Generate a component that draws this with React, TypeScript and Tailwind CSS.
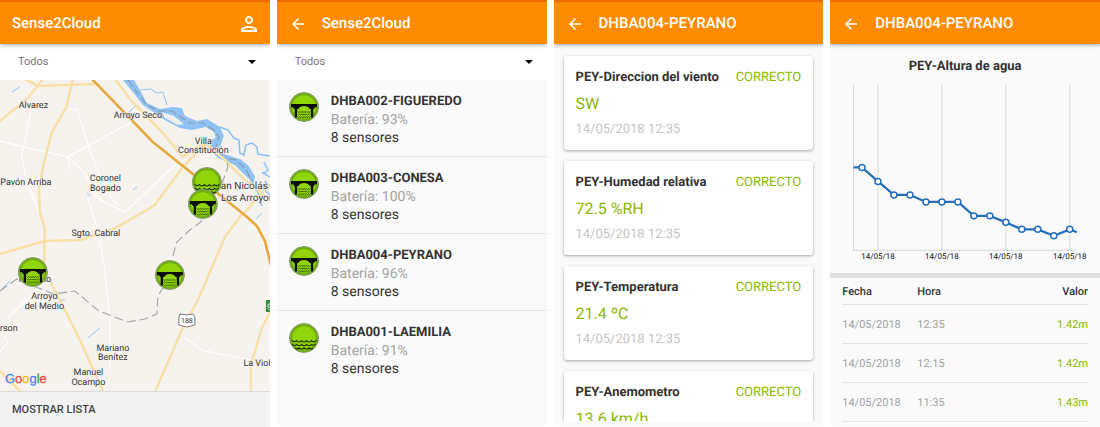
import { ReactNode } from "react";
import { MdArrowBack, MdOutlinePerson } from "react-icons/md";

const stations = [
  { name: "DHBA002-FIGUEREDO", battery: 93, kind: "bridge" },
  { name: "DHBA003-CONESA", battery: 100, kind: "bridge" },
  { name: "DHBA004-PEYRANO", battery: 96, kind: "bridge" },
  { name: "DHBA001-LAEMILIA", battery: 91, kind: "water" },
];

const sensors = [
  { name: "PEY-Direccion del viento", value: "SW" },
  { name: "PEY-Humedad relativa", value: "72.5 %RH" },
  { name: "PEY-Temperatura", value: "21.4 ºC" },
  { name: "PEY-Anemometro", value: "13.6 km/h" },
];

const readings = [
  { date: "14/05/2018", time: "12:35", value: "1.42m" },
  { date: "14/05/2018", time: "12:15", value: "1.42m" },
  { date: "14/05/2018", time: "11:35", value: "1.43m" },
];

const points = [
  [32, 167.5], [48, 181.5], [64, 195], [80, 195], [96, 202], [112, 202], [128, 202],
  [144, 216], [160, 216], [176, 222.5], [192, 229.5], [208, 229.5], [224, 236], [240, 229.5],
];

const ticks = [48, 112, 176, 240];

const places: [string, number, number][] = [
  ["Alvarez", 33.5, 108],
  ["Arroyo Seco", 138, 118],
  ["Villa", 203.5, 144],
  ["Constitución", 203.5, 153],
  ["Pavón Arriba", 26, 185],
  ["Coronel", 105.5, 181],
  ["Bogado", 105.5, 191],
  ["Sgto. Cabral", 96, 236],
  ["Peyrano", 35, 282],
  ["Arroyo", 44.5, 299],
  ["del Medio", 44.5, 309],
  ["Mariano", 113, 351],
  ["Benítez", 113, 360],
  ["Manuel", 88.5, 375],
  ["Ocampo", 88.5, 385],
];

// Round station badge, drawn around 0,0 with a radius of 15
function Badge({ kind }: { kind: string }) {
  return (
    <g>
      <circle r="14.5" fill="#74b113" stroke="#8a9a78" strokeWidth="1" />
      <circle r="12.4" fill="#91d508" stroke="#5f980f" strokeWidth="0.7" />
      {kind === "bridge" ? (
        <g>
          <path d="M-13 -3H13V0.2H11.2L9.2 2.6V10.5H6.8V2H-6.8V10.5H-9.2V2.6L-11.2 0.2H-13Z" fill="#0b0f05" />
          <path d="M-6.8 11V4.2Q-5 -0.9 0 -0.9T6.8 4.2V11Z" fill="#91d508" />
          <path
            d="M-6.5 4.6q1.1 1.6 2.2 0q1.1 1.6 2.2 0q1.1 1.6 2.2 0q1.1 1.6 2.2 0q1.1 1.6 2.2 0q1.1 1.6 2.2 0M-6.5 7.2q1.1 1.6 2.2 0q1.1 1.6 2.2 0q1.1 1.6 2.2 0q1.1 1.6 2.2 0q1.1 1.6 2.2 0q1.1 1.6 2.2 0M-6.5 9.8q1.1 1.6 2.2 0q1.1 1.6 2.2 0q1.1 1.6 2.2 0q1.1 1.6 2.2 0q1.1 1.6 2.2 0q1.1 1.6 2.2 0"
            fill="none"
            stroke="#2a4207"
            strokeWidth="0.8"
          />
        </g>
      ) : (
        <path
          d="M-12.5 2q2.5 3 5 0.6q2.5 2.8 5 0q2.5 2.8 5 0q2.5 2.8 5 0q2.5 2.8 5 -0.6M-12 6q2.3 2.8 4.6 0.4q2.5 2.8 5 0q2.5 2.8 5 0q2.5 2.8 5 0q2.3 2 4.2 -0.4M-9 9.8q2 2 4 0q2.5 2.4 5 0q2.5 2.4 5 0q2 2 4 0"
          fill="none"
          stroke="#1a2905"
          strokeWidth="1.1"
        />
      )}
    </g>
  );
}

function Header({ title, back }: { title: string; back?: boolean }) {
  return (
    <header className="relative z-10 flex h-11 shrink-0 items-center border-t-2 border-[#ee6a00] bg-[#ff8c00] pt-px text-white shadow-[0_1px_4px_rgba(0,0,0,0.35)]">
      {back && (
        <button aria-label="Volver" className="ml-3 flex w-[33px] items-center">
          <MdArrowBack className="size-[18px]" />
        </button>
      )}
      <h1 className={back ? "text-[15px] font-medium" : "ml-3 text-[15px] font-medium"}>{title}</h1>
      {!back && (
        <button aria-label="Usuario" className="ml-auto mr-[9px]">
          <MdOutlinePerson className="size-6" />
        </button>
      )}
    </header>
  );
}

function Filter() {
  return (
    <div className="relative flex h-9 shrink-0 items-center bg-white px-[18px]">
      <select aria-label="Filtro" className="w-full appearance-none text-[11px] text-[#757575]">
        <option>Todos</option>
      </select>
      <svg viewBox="0 0 8 4" className="pointer-events-none absolute right-[14px] h-1 w-2">
        <path d="M0 0H8L4 4Z" fill="#000" />
      </svg>
    </div>
  );
}

function Screen({ children }: { children: ReactNode }) {
  return <section className="mb-[2px] flex min-h-0 flex-col overflow-hidden bg-[#fafafa]">{children}</section>;
}

function StationMap() {
  return (
    <svg viewBox="0 80 270 311" preserveAspectRatio="xMidYMid slice" className="min-h-0 w-full flex-1 bg-[#f6f3ef]">
      {/* minor roads */}
      <g fill="none" stroke="#ffffff" strokeWidth="1.2">
        <path d="M0 141L68 157L135 120L134 108M68 157L85 173L97 198L125 212" />
        <path d="M69 110L77 109L90 150L105 190L118 206" />
        <path d="M31 112L22 155L26 178L40 215" />
        <path d="M88 198L98 230L105 270L110 320L110 370" />
        <path d="M68 157L70 170M125 212L175 165" />
        <path d="M185 337L201 350L270 364" />
        <path d="M0 352L8 342L0 330M8 318L44 283" />
      </g>
      {/* water */}
      <g fill="none" stroke="#8fc3f5" strokeWidth="1">
        <path d="M140 90L151 89L157 93L163 92L167 105M129 112L136 106M12 92L20 87M87 193L91 196M133 190L137 187M88 338L100 328M2 289L10 281M256 219L262 213M60 300L65 300" />
        <path d="M220 127L228 130L234 138L239 140L240 153L244 155L246 145L252 143L257 147L258 154L270 156M262 172L270 177M260 186L270 195M264 162L268 170L263 174M250 182L258 192L262 206M265 181L268 185" strokeWidth="1.6" />
      </g>
      <path
        d="M123 80H134L140 90L147 103L160 109L173 107L182 108L185 116L197 121L207 119L220 127L224 136L219 150L224 154L240 159L248 165L255 176L254 184L246 176L235 165L218 158L208 147L211 140L216 138L214 132L206 127L192 130L180 128L163 119L155 113L143 105L133 92Z"
        fill="#8fc3f5"
      />
      <path d="M162 112L174 116L184 124L178 125L165 118Z" fill="#eef1ef" />
      <path
        d="M128 80L137 92L146 104L158 111L172 111L181 117L190 123L203 123L214 130L219 137L216 148L224 158L236 160L246 169L252 181"
        fill="none"
        stroke="#8798a8"
        strokeWidth="1.1"
        strokeDasharray="8 3"
      />
      {/* secondary roads */}
      <g fill="none" stroke="#f9e0a8" strokeWidth="2.6" strokeLinejoin="round">
        <path d="M25 79L38 86L26 100L0 121M43 79L38 86L95 84" />
        <path d="M73 79L66 108L52 132L44 163L39 190L40 212L45 228L44 270L60 300L80 340L100 384L103 392" />
        <path d="M115 79L131 100L162 132L183 157L198 146L208 145L225 160L243 178L270 200" />
        <path d="M203 146L183 167L155 205L140 214L112 230L80 240L45 241L0 254" />
        <path d="M242 214L225 237L198 300L182 330L155 392M270 185L256 199L245 213" />
        <path d="M270 312L262 328L251 365L251 392M0 371L21 392" />
      </g>
      <path d="M92 79L153 142L193 174L210 187L246 216L257 226L265 241L271 265" fill="none" stroke="#e8a840" strokeWidth="2.6" />
      {/* district border */}
      <path
        d="M0 291L17 279L36 287L54 294L75 291L99 311L128 322L145 319L157 314L158 296L163 288M173 256L177 242L190 230L201 222L203 210M222 184L228 167L227 161"
        fill="none"
        stroke="#a5a5a5"
        strokeWidth="1.1"
        strokeDasharray="9 4"
      />
      <g fontSize="9" textAnchor="middle" fill="#333" stroke="#f6f3ef" strokeWidth="1" paintOrder="stroke">
        {places.map(([name, x, y]) => (
          <text key={name} x={x} y={y}>
            {name}
          </text>
        ))}
        <text x="0" y="331" textAnchor="start">rson</text>
        <text x="243.5" y="366" textAnchor="start">La Violeta</text>
        <text x="215" y="189" fontSize="10" textAnchor="start">San Nicolás de</text>
        <text x="221" y="201" fontSize="10" textAnchor="start">Los Arroyos</text>
      </g>
      <path d="M180 314Q187 316 193 314L195 317V325L187 327L179 325V317Z" fill="#fff" stroke="#777" strokeWidth="1" />
      <text x="187" y="323" fontSize="7" textAnchor="middle" fill="#333">188</text>
      <rect x="266" y="300" width="12" height="12" fill="#3c8c3c" />
      <text x="267" y="310" fontSize="9" fill="#fff">9</text>
      <g transform="translate(207 182)"><Badge kind="water" /></g>
      <g transform="translate(203 204)"><Badge kind="bridge" /></g>
      <g transform="translate(33 272)"><Badge kind="bridge" /></g>
      <g transform="translate(170 275)"><Badge kind="bridge" /></g>
      <text x="5" y="383" fontSize="13" className="font-['Liberation_Sans',sans-serif]">
        <tspan fill="#4285f4" stroke="#4285f4" strokeWidth="0.3">G</tspan>
        <tspan fill="#ea4335" stroke="#ea4335" strokeWidth="0.3">o</tspan>
        <tspan fill="#fbbc05" stroke="#fbbc05" strokeWidth="0.3">o</tspan>
        <tspan fill="#4285f4" stroke="#4285f4" strokeWidth="0.3">g</tspan>
        <tspan fill="#34a853" stroke="#34a853" strokeWidth="0.3">l</tspan>
        <tspan fill="#ea4335" stroke="#ea4335" strokeWidth="0.3">e</tspan>
      </text>
    </svg>
  );
}

function Chart() {
  const line = [[23.5, 167.5], ...points, [247, 232.5]].map((p) => p.join(",")).join(" ");
  return (
    <svg viewBox="0 85 270 180" className="w-full shrink-0">
      <g stroke="#d6d6d6" strokeWidth="1">
        <path d="M23.5 85V250.5H247" fill="none" />
        {ticks.map((x) => (
          <line key={x} x1={x} x2={x} y1="85" y2="250" />
        ))}
      </g>
      <polyline points={line} fill="none" stroke="#246eb9" strokeWidth="2.2" />
      {points.map(([x, y]) => (
        <circle key={x} cx={x} cy={y} r="3" fill="#fff" stroke="#246eb9" strokeWidth="1.5" />
      ))}
      {ticks.map((x) => (
        <text key={x} x={x} y="259" fontSize="8" textAnchor="middle" fill="#111">
          14/05/18
        </text>
      ))}
    </svg>
  );
}

export default function App() {
  return (
    <main className="grid h-screen grid-cols-4 grid-rows-[minmax(0,1fr)] gap-[7px] overflow-hidden bg-white font-[Roboto,sans-serif] text-[#333] [text-rendering:geometricPrecision]">
      {/* Map */}
      <section className="flex min-h-0 flex-col overflow-hidden">
        <Header title="Sense2Cloud" />
        <Filter />
        <StationMap />
        <button className="h-9 shrink-0 border-t border-[#dcdcdc] bg-[#f2f2f2] px-3 pt-[2px] text-left text-[11px] font-medium text-[#444]">
          MOSTRAR LISTA
        </button>
      </section>

      {/* Station list */}
      <Screen>
        <Header title="Sense2Cloud" back />
        <Filter />
        <ul>
          {stations.map((s) => (
            <li key={s.name} className="flex h-[77px] gap-3 border-b border-[#e2e2e2] px-3 pt-3 text-[14px] leading-[18px] last:border-b-0">
              <svg viewBox="-15 -15 30 30" className="size-[30px] shrink-0">
                <Badge kind={s.kind} />
              </svg>
              <div className="pt-px">
                <h2 className="text-[13px] font-bold">{s.name}</h2>
                <p className="text-[#a3a3a3]">Batería: {s.battery}%</p>
                <p>8 sensores</p>
              </div>
            </li>
          ))}
        </ul>
      </Screen>

      {/* Sensors of a station */}
      <Screen>
        <Header title="DHBA004-PEYRANO" back />
        <div className="mb-1 flex min-h-0 flex-1 flex-col gap-[11px] overflow-hidden px-[10px] pt-3">
          {sensors.map((s) => (
            <article key={s.name} className="h-[94px] shrink-0 rounded-[3px] bg-white px-3 pt-3 shadow-[0_1px_3px_rgba(0,0,0,0.35)]">
              <div className="flex justify-between text-[13px] leading-5">
                <h2 className="font-bold">{s.name}</h2>
                <span className="text-[#8ab800]">CORRECTO</span>
              </div>
              <p className="mt-1 text-[16px] leading-6 text-[#8ab800]">{s.value}</p>
              <p className="mt-1 text-[13px] leading-5 text-[#c4c4c4]">14/05/2018 12:35</p>
            </article>
          ))}
        </div>
      </Screen>

      {/* Sensor history */}
      <Screen>
        <Header title="DHBA004-PEYRANO" back />
        <h2 className="pt-[13px] pb-2 text-center text-[13px] leading-5 font-bold">PEY-Altura de agua</h2>
        <Chart />
        <div className="mt-2 border-t-[5px] border-[#e0e0e0] px-3">
          <table className="w-full table-fixed text-left text-[11px] text-[#a0a0a0]">
            <thead className="text-[#333]">
              <tr className="h-[27px] border-b border-[#e4e4e4]">
                <th className="w-[75px] pt-[2px] font-medium">Fecha</th>
                <th className="pt-[2px] font-medium">Hora</th>
                <th className="pt-[2px] text-right font-medium">Valor</th>
              </tr>
            </thead>
            <tbody>
              {readings.map((r) => (
                <tr key={r.time} className="h-[39px] border-b border-[#e4e4e4]">
                  <td className="pt-[2px]">{r.date}</td>
                  <td className="pt-[2px]">{r.time}</td>
                  <td className="pt-[2px] text-right text-[#8ab800]">{r.value}</td>
                </tr>
              ))}
            </tbody>
          </table>
        </div>
      </Screen>
    </main>
  );
}
